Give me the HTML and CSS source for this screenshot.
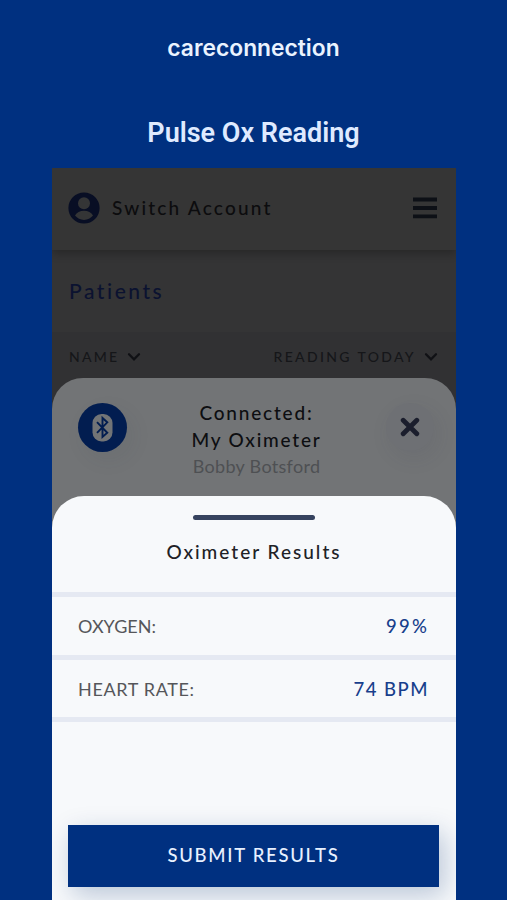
FILE: index.html
```html
<!DOCTYPE html>
<html lang="en">
<head>
<meta charset="utf-8">
<title>careconnection</title>
<link rel="stylesheet" href="styles.css">
</head>
<body>
<header class="brand">careconnection</header>
<h1 class="title">Pulse Ox Reading</h1>
<main class="phone">
  <div class="account-bar">
    <svg class="avatar" viewBox="0 0 32 32"><circle cx="16" cy="16" r="15.6" fill="#080e24"/><circle cx="16" cy="11.2" r="6" fill="#343536"/><path d="M7 23.6C8.500 20.600 12 18.800 16 18.800S23.500 20.600 25 23.600C22.800 26.400 19.600 28 16 28S9.200 26.400 7 23.600Z" fill="#343536"/></svg>
    <span class="account-name">Switch Account</span>
    <svg class="menu" viewBox="0 0 24 22"><path d="M0 2.500H24M0 11H24M0 19.300H24" stroke="#0d1016" stroke-width="3.800"/></svg>
  </div>
  <h2 class="patients">Patients</h2>
  <div class="columns">
    <span class="col-name">NAME</span>
    <svg class="chevron" viewBox="0 0 14 10"><path d="M2 2.300L7 7.300L12 2.300" fill="none" stroke="#101115" stroke-width="2.300" stroke-linecap="round"/></svg>
    <span class="col-reading">READING TODAY</span>
    <svg class="chevron" viewBox="0 0 14 10"><path d="M2 2.300L7 7.300L12 2.300" fill="none" stroke="#101115" stroke-width="2.300" stroke-linecap="round"/></svg>
  </div>
  <section class="device">
    <div class="bluetooth">
      <svg viewBox="0 0 49 49"><rect x="14.500" y="11" width="20" height="27.500" rx="9" fill="#727476"/><path d="M19 19.200L29.300 29.800L24.500 34V15L29.300 19.400L19 29.800" fill="none" stroke="#021d50" stroke-width="1.900"/></svg>
    </div>
    <div class="device-text">
      <p class="status">Connected:</p>
      <p class="model">My Oximeter</p>
      <p class="person">Bobby Botsford</p>
    </div>
    <div class="close">
      <svg viewBox="0 0 20 20"><path d="M3.200 3.200L16.800 16.800M16.800 3.200L3.200 16.800" stroke="#1b1e2d" stroke-width="4.800" stroke-linecap="round"/></svg>
    </div>
  </section>
  <section class="results">
    <div class="handle"></div>
    <h3 class="results-title">Oximeter Results</h3>
    <div class="row"><span class="label oxygen">OXYGEN:</span><span class="value percent">99%</span></div>
    <div class="row"><span class="label heart">HEART RATE:</span><span class="value bpm">74 BPM</span></div>
    <div class="submit-area"><button class="submit">SUBMIT RESULTS</button></div>
  </section>
</main>
</body>
</html>
```

FILE: styles.css
```css
* { box-sizing: border-box; }
body {
  margin: 0;
  height: 900px;
  overflow: hidden;
  display: flex;
  flex-direction: column;
  background: #003080;
  font-family: Lato, sans-serif;
}
h1, h2, h3, p { margin: 0; font-weight: 500; }
span, p, h1, h2, h3 { white-space: nowrap; }
svg { display: block; flex: none; }
.brand {
  height: 94px;
  text-align: center;
  font: 600 22.800px/95px Inter, sans-serif;
  color: #eaf3ff;
}
.title {
  height: 74px;
  text-align: center;
  font: 600 27px/78px Roboto, sans-serif;
  color: #dfeaff;
}
.phone {
  width: 404px;
  height: 732px;
  margin-left: 52px;
  overflow: hidden;
  background: #343435;
}
.account-bar {
  position: relative;
  height: 82px;
  display: flex;
  align-items: center;
  padding: 0 19px 2px 16px;
  background: #353535;
  box-shadow: 0 3px 9px rgba(0, 0, 0, .28);
}
.avatar { width: 32px; height: 32px; margin-right: 12px; }
.account-name { margin-bottom: 2px; font-size: 19px; font-weight: 500; letter-spacing: 2.200px; color: #0c0c0e; }
.menu { width: 24px; height: 22px; margin-left: auto; }
.patients {
  height: 82px;
  padding-left: 17px;
  font-size: 21px;
  line-height: 82px;
  letter-spacing: 2.550px;
  color: #0b1230;
}
.columns {
  height: 76px;
  display: flex;
  align-items: flex-start;
  padding: 0 18px 0 17px;
  background: #313133;
  font-size: 14px;
  font-weight: 500;
  line-height: 49px;
  letter-spacing: 2.200px;
  color: #151619;
}
.chevron { width: 14px; height: 10px; margin-top: 20px; }
.col-name { margin-right: 8px; }
.col-reading { margin-left: auto; margin-right: 8px; letter-spacing: 2.350px; }
.device {
  position: relative;
  height: 160px;
  margin-top: -30.500px;
  padding: 21px 22px 0 26px;
  display: flex;
  align-items: flex-start;
  justify-content: space-between;
  border-radius: 31px 31px 0 0;
  background: #727476;
}
.bluetooth {
  width: 49px;
  height: 49px;
  margin-top: 4px;
  border-radius: 50%;
  background: #021d50;
  box-shadow: 6px 8px 20px rgba(55, 60, 75, .08);
}
.device-text { text-align: center; color: #0d0e11; font-size: 19px; line-height: 27px; }
.status { letter-spacing: 1.8px; }
.model { letter-spacing: 1.8px; }
.person { font-size: 18px; font-weight: 400; letter-spacing: .300px; color: #4e5053; }
.close {
  width: 48px;
  height: 48px;
  margin-top: 4px;
  padding: 14px;
  border-radius: 50%;
  background: #6e7074;
  box-shadow: 4px 7px 20px rgba(55, 60, 75, .1);
}
.results {
  position: relative;
  height: 404px;
  margin-top: -41.500px;
  padding-top: 18.500px;
  border-radius: 32px 32px 0 0;
  background: #f7f9fb;
}
.handle { width: 122px; height: 5.500px; margin: 0 auto; border-radius: 3px; background: #36435f; }
.results-title {
  height: 72.200px;
  text-align: center;
  font-size: 19px;
  line-height: 63px;
  letter-spacing: 2px;
  color: #202126;
}
.row {
  height: 62.500px;
  display: flex;
  justify-content: space-between;
  padding: 0 27px 0 26px;
  border-top: 5px solid #e5e9f2;
  line-height: 58px;
}
.label { font-size: 18px; color: #55565a; }
.heart { letter-spacing: .650px; }
.value { font-size: 18.500px; font-weight: 500; color: #183f8c; letter-spacing: 1.500px; }
.percent { letter-spacing: 2.200px; }
.submit-area { height: 184px; padding: 102.500px 17px 0 16px; border-top: 5px solid #e5e9f2; }
.submit {
  display: block;
  width: 371px;
  height: 62px;
  padding: 0;
  border: 0;
  background: #003080;
  box-shadow: 5px 8px 26px rgba(0, 48, 110, .25);
  font: 500 18.500px/61px Lato, sans-serif;
  letter-spacing: 1.700px;
  color: #e8f1ff;
}
```
